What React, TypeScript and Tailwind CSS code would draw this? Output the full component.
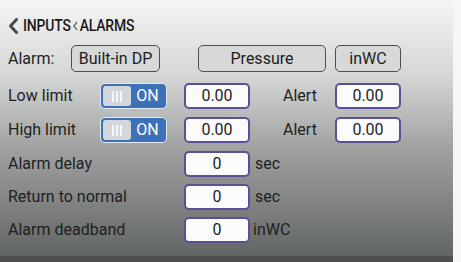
import React from "react";

const font = { fontFamily: "Roboto, 'Noto Sans', 'Liberation Sans', sans-serif" };

function Field({ value, w = "w-[66px]" }: { value: string; w?: string }) {
  return (
    <div
      className={`${w} h-[26px] rounded-[5px] border-2 border-[#5b5096] bg-[#fbfbfb] flex items-center justify-center text-[16px] text-[#1e1e1e]`}
    >
      {value}
    </div>
  );
}

function Toggle() {
  return (
    <div className="w-[67px] h-[26px] rounded-[5px] border border-[#e4ebf3] bg-[#3d71b7] p-[2px] flex items-center">
      <div className="w-[28px] h-full rounded-[3px] bg-[#d3d7dc] flex items-center justify-center gap-[2px]">
        <span className="w-[2px] h-[11px] bg-[#f4f6f8]" />
        <span className="w-[2px] h-[11px] bg-[#f4f6f8]" />
        <span className="w-[2px] h-[11px] bg-[#f4f6f8]" />
      </div>
      <div className="flex-1 text-center text-white text-[16px] leading-none">ON</div>
    </div>
  );
}

function GrayBtn({ label, w }: { label: string; w: string }) {
  return (
    <div
      className={`${w} h-[27px] rounded-[5px] border-[1.5px] border-[#4e4e4e] bg-[#d7d8d8] flex items-center justify-center text-[16px] text-[#1d1d1d]`}
    >
      {label}
    </div>
  );
}

export default function App() {
  return (
    <div className="w-[461px] h-[262px] flex bg-[#f5f5f5] overflow-hidden" style={font}>
      <div className="w-[453px] flex flex-col">
        <div className="h-[256px] bg-[linear-gradient(to_bottom,#f4f5f5_0%,#d4d6d5_30%,#9fa2a1_58%,#616564_100%)] text-[#1f1f1f] px-[8px] pt-[18px]">
          <div className="flex items-center h-[16px]">
            <svg width="11" height="16" viewBox="0 0 11 16" className="mr-[4px] shrink-0">
              <path d="M8.5 1.5 L2.5 8 L8.5 14.5" stroke="#4a4a4a" strokeWidth="3" fill="none" strokeLinecap="round" strokeLinejoin="round" />
            </svg>
            <div className="flex items-center origin-left scale-x-[0.82] text-[17px] font-medium tracking-[-0.2px] text-[#1a1a1a] whitespace-nowrap">
              <span>INPUTS</span>
              <svg width="9" height="10" viewBox="0 0 9 10" className="mx-[1px]">
                <path d="M6.5 1.5 L3 5 L6.5 8.5" stroke="#666" strokeWidth="1.7" fill="none" strokeLinecap="round" strokeLinejoin="round" />
              </svg>
              <span>ALARMS</span>
            </div>
          </div>

          <div className="flex items-center mt-[11px] h-[27px]">
            <span className="w-[63px] text-[16px]">Alarm:</span>
            <GrayBtn label="Built-in DP" w="w-[89px]" />
            <div className="w-[38px]" />
            <GrayBtn label="Pressure" w="w-[128px]" />
            <div className="w-[9px]" />
            <GrayBtn label="inWC" w="w-[66px]" />
          </div>

          <div className="flex items-center mt-[11px] h-[26px]">
            <span className="w-[92px] text-[16px]">Low limit</span>
            <Toggle />
            <div className="w-[17px]" />
            <Field value="0.00" />
            <span className="w-[85px] pl-[33px] text-[16px]">Alert</span>
            <Field value="0.00" />
          </div>

          <div className="flex items-center mt-[8px] h-[26px]">
            <span className="w-[92px] text-[16px]">High limit</span>
            <Toggle />
            <div className="w-[17px]" />
            <Field value="0.00" />
            <span className="w-[85px] pl-[33px] text-[16px]">Alert</span>
            <Field value="0.00" />
          </div>

          <div className="flex items-center mt-[7px] h-[27px]">
            <span className="w-[176px] text-[16px]">Alarm delay</span>
            <Field value="0" />
            <span className="pl-[5px] text-[16px]">sec</span>
          </div>

          <div className="flex items-center mt-[7px] h-[26px]">
            <span className="w-[176px] text-[16px]">Return to normal</span>
            <Field value="0" />
            <span className="pl-[5px] text-[16px]">sec</span>
          </div>

          <div className="flex items-center mt-[7px] h-[26px]">
            <span className="w-[176px] text-[16px]">Alarm deadband</span>
            <Field value="0" />
            <span className="pl-[3px] text-[16px]">inWC</span>
          </div>
        </div>
        <div className="h-[6px] bg-[#4c4f4e]" />
      </div>
      <div className="flex-1 bg-[#f6f6f6]" />
    </div>
  );
}
